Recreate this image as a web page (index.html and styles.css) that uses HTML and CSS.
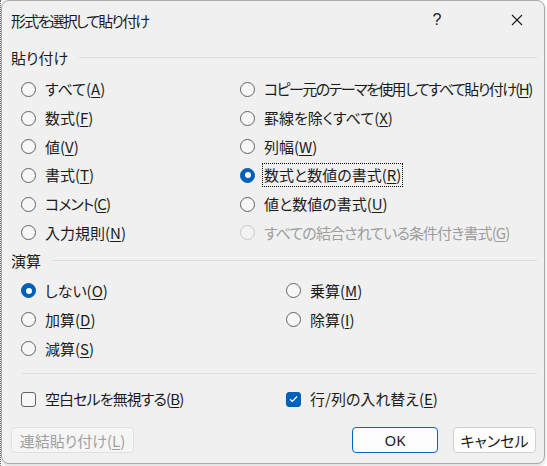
FILE: index.html
```html
<!DOCTYPE html>
<html lang="ja">
<head>
  <meta charset="UTF-8">
  <title>形式を選択して貼り付け</title>
  <link rel="stylesheet" href="styles.css">
</head>
<body>
  <div class="desk">
    <div class="dialog">

      <div class="titlebar">
        <span class="title">形式を選択して貼り付け</span>
        <span class="cap help">?</span>
        <span class="cap close">
          <svg width="12" height="12" viewBox="0 0 12 12"><path d="M1 1L11 11M11 1L1 11" stroke="#1b1b1b" stroke-width="1.1" fill="none"/></svg>
        </span>
      </div>

      <div class="group-head first">貼り付け</div>
      <div class="opts paste">
        <div class="opt"><span class="radio"></span><span class="lbl">すべて(<u>A</u>)</span></div>
        <div class="opt"><span class="radio"></span><span class="lbl tight">コピー元のテーマを使用してすべて貼り付け(<u>H</u>)</span></div>
        <div class="opt"><span class="radio"></span><span class="lbl">数式(<u>F</u>)</span></div>
        <div class="opt"><span class="radio"></span><span class="lbl">罫線を除くすべて(<u>X</u>)</span></div>
        <div class="opt"><span class="radio"></span><span class="lbl">値(<u>V</u>)</span></div>
        <div class="opt"><span class="radio"></span><span class="lbl">列幅(<u>W</u>)</span></div>
        <div class="opt"><span class="radio"></span><span class="lbl">書式(<u>T</u>)</span></div>
        <div class="opt"><span class="radio on"></span><span class="lbl focus">数式と数値の書式(<u>R</u>)</span></div>
        <div class="opt"><span class="radio"></span><span class="lbl kana">コメント(<u>C</u>)</span></div>
        <div class="opt"><span class="radio"></span><span class="lbl">値と数値の書式(<u>U</u>)</span></div>
        <div class="opt"><span class="radio"></span><span class="lbl">入力規則(<u>N</u>)</span></div>
        <div class="opt off"><span class="radio"></span><span class="lbl semi">すべての結合されている条件付き書式(<u>G</u>)</span></div>
      </div>

      <div class="group-head ops-head">演算</div>
      <div class="opts ops">
        <div class="opt"><span class="radio on"></span><span class="lbl">しない(<u>O</u>)</span></div>
        <div class="opt"><span class="radio"></span><span class="lbl">乗算(<u>M</u>)</span></div>
        <div class="opt"><span class="radio"></span><span class="lbl">加算(<u>D</u>)</span></div>
        <div class="opt"><span class="radio"></span><span class="lbl">除算(<u>I</u>)</span></div>
        <div class="opt"><span class="radio"></span><span class="lbl">減算(<u>S</u>)</span></div>
      </div>

      <div class="sep"></div>

      <div class="opts checks">
        <div class="opt"><span class="check"></span><span class="lbl semi">空白セルを無視する(<u>B</u>)</span></div>
        <div class="opt">
          <span class="check on">
            <svg width="9" height="8" viewBox="0 0 9 8"><path d="M1 4.2L3.4 6.5L8 1.5" stroke="#fff" stroke-width="1.2" fill="none"/></svg>
          </span>
          <span class="lbl">行/列の入れ替え(<u>E</u>)</span>
        </div>
      </div>

      <div class="buttons">
        <button class="btn link" disabled>連結貼り付け(<u>L</u>)</button>
        <button class="btn ok">OK</button>
        <button class="btn cancel">キャンセル</button>
      </div>

    </div>
  </div>
</body>
</html>
```

FILE: styles.css
```css
* {
  box-sizing: border-box;
}
body {
  margin: 0;
  background: #fff;
  font-family: "Noto Sans CJK JP", "Noto Sans", sans-serif;
  font-size: 15px;
  color: #1b1b1b;
  font-feature-settings: "palt";
}
u {
  text-underline-offset: 2px;
}
.desk {
  height: 466px;
  border-left: 1px dotted #6a6a6a;
}
.dialog {
  width: 544px;
  height: 464px;
  background: #f0f0f0;
  border: 1px solid #a9a9a9;
  border-radius: 8px;
  box-shadow: 0 2px 4px rgba(0, 0, 0, 0.15);
}

/* title bar */
.titlebar {
  display: flex;
  align-items: center;
  height: 38px;
  padding: 0 4px 0 9px;
}
.title {
  letter-spacing: -1.8px;
}
.cap {
  width: 46px;
  height: 38px;
  display: flex;
  align-items: center;
  justify-content: center;
}
.help {
  margin-left: auto;
  margin-right: 34px;
  font-family: "Liberation Sans", sans-serif;
  font-size: 16px;
}

/* group headings with rule */
.group-head {
  display: flex;
  align-items: center;
  gap: 11px;
  height: 20px;
  margin: 8px 7px 0 9px;
}
.group-head::after {
  content: "";
  flex: 1;
  height: 1px;
  background: #dcdcdc;
}
.ops-head {
  margin-top: 3px;
}

/* option grids */
.opts {
  display: grid;
  margin-left: 19px;
}
.paste {
  grid-template-columns: 219px 1fr;
  grid-auto-rows: 28.7px;
  margin-top: 8px;
}
.ops {
  grid-template-columns: 265px 1fr;
  grid-auto-rows: 29px;
  margin-top: 6px;
}
.checks {
  grid-template-columns: 265px 1fr;
  grid-auto-rows: 24px;
  margin-top: 13px;
}
.opt {
  display: flex;
  align-items: center;
  gap: 7px;
}
.lbl {
  border: 1px solid transparent;
  padding: 0 1px;
  line-height: 22px;
  white-space: nowrap;
}
.lbl.tight {
  letter-spacing: -1.55px;
}
.lbl.kana {
  letter-spacing: -1px;
}
.lbl.semi {
  letter-spacing: -0.9px;
}
.lbl.focus {
  border: 1px dotted #000;
}
.radio, .check {
  flex: none;
  width: 15px;
  height: 15px;
  border: 1px solid #626262;
  background: #f7f7f7;
  display: flex;
  align-items: center;
  justify-content: center;
}
.radio {
  border-radius: 50%;
}
.radio.on {
  background: #005fb8;
  border-color: #005fb8;
}
.radio.on::after {
  content: "";
  width: 6px;
  height: 6px;
  border-radius: 50%;
  background: #fff;
}
.check {
  border-radius: 3px;
}
.check.on {
  background: #005fb8;
  border-color: #005fb8;
}
.opt.off .radio {
  border-color: #c8c8c8;
  background: #f3f3f3;
}
.opt.off .lbl {
  color: #9d9d9d;
}

.sep {
  height: 1px;
  background: #dcdcdc;
  margin: 10px 7px 0 20px;
}

/* bottom buttons */
.buttons {
  display: flex;
  margin-top: 16px;
  padding: 0 8px 0 9px;
}
.btn {
  height: 26px;
  border: 1px solid #d0d0d0;
  border-radius: 4px;
  background: #fdfdfd;
  font: inherit;
  color: #1b1b1b;
  padding: 0;
  display: flex;
  align-items: center;
  justify-content: center;
}
.btn.link {
  width: 123px;
}
.btn.link:disabled {
  color: #a0a0a0;
  background: #f5f5f5;
  border-color: #e0e0e0;
}
.btn.ok {
  width: 86px;
  margin-left: auto;
  border-color: #0067c0;
  font-family: "Noto Sans", sans-serif;
}
.btn.cancel {
  width: 83px;
  margin-left: 15px;
}
```
